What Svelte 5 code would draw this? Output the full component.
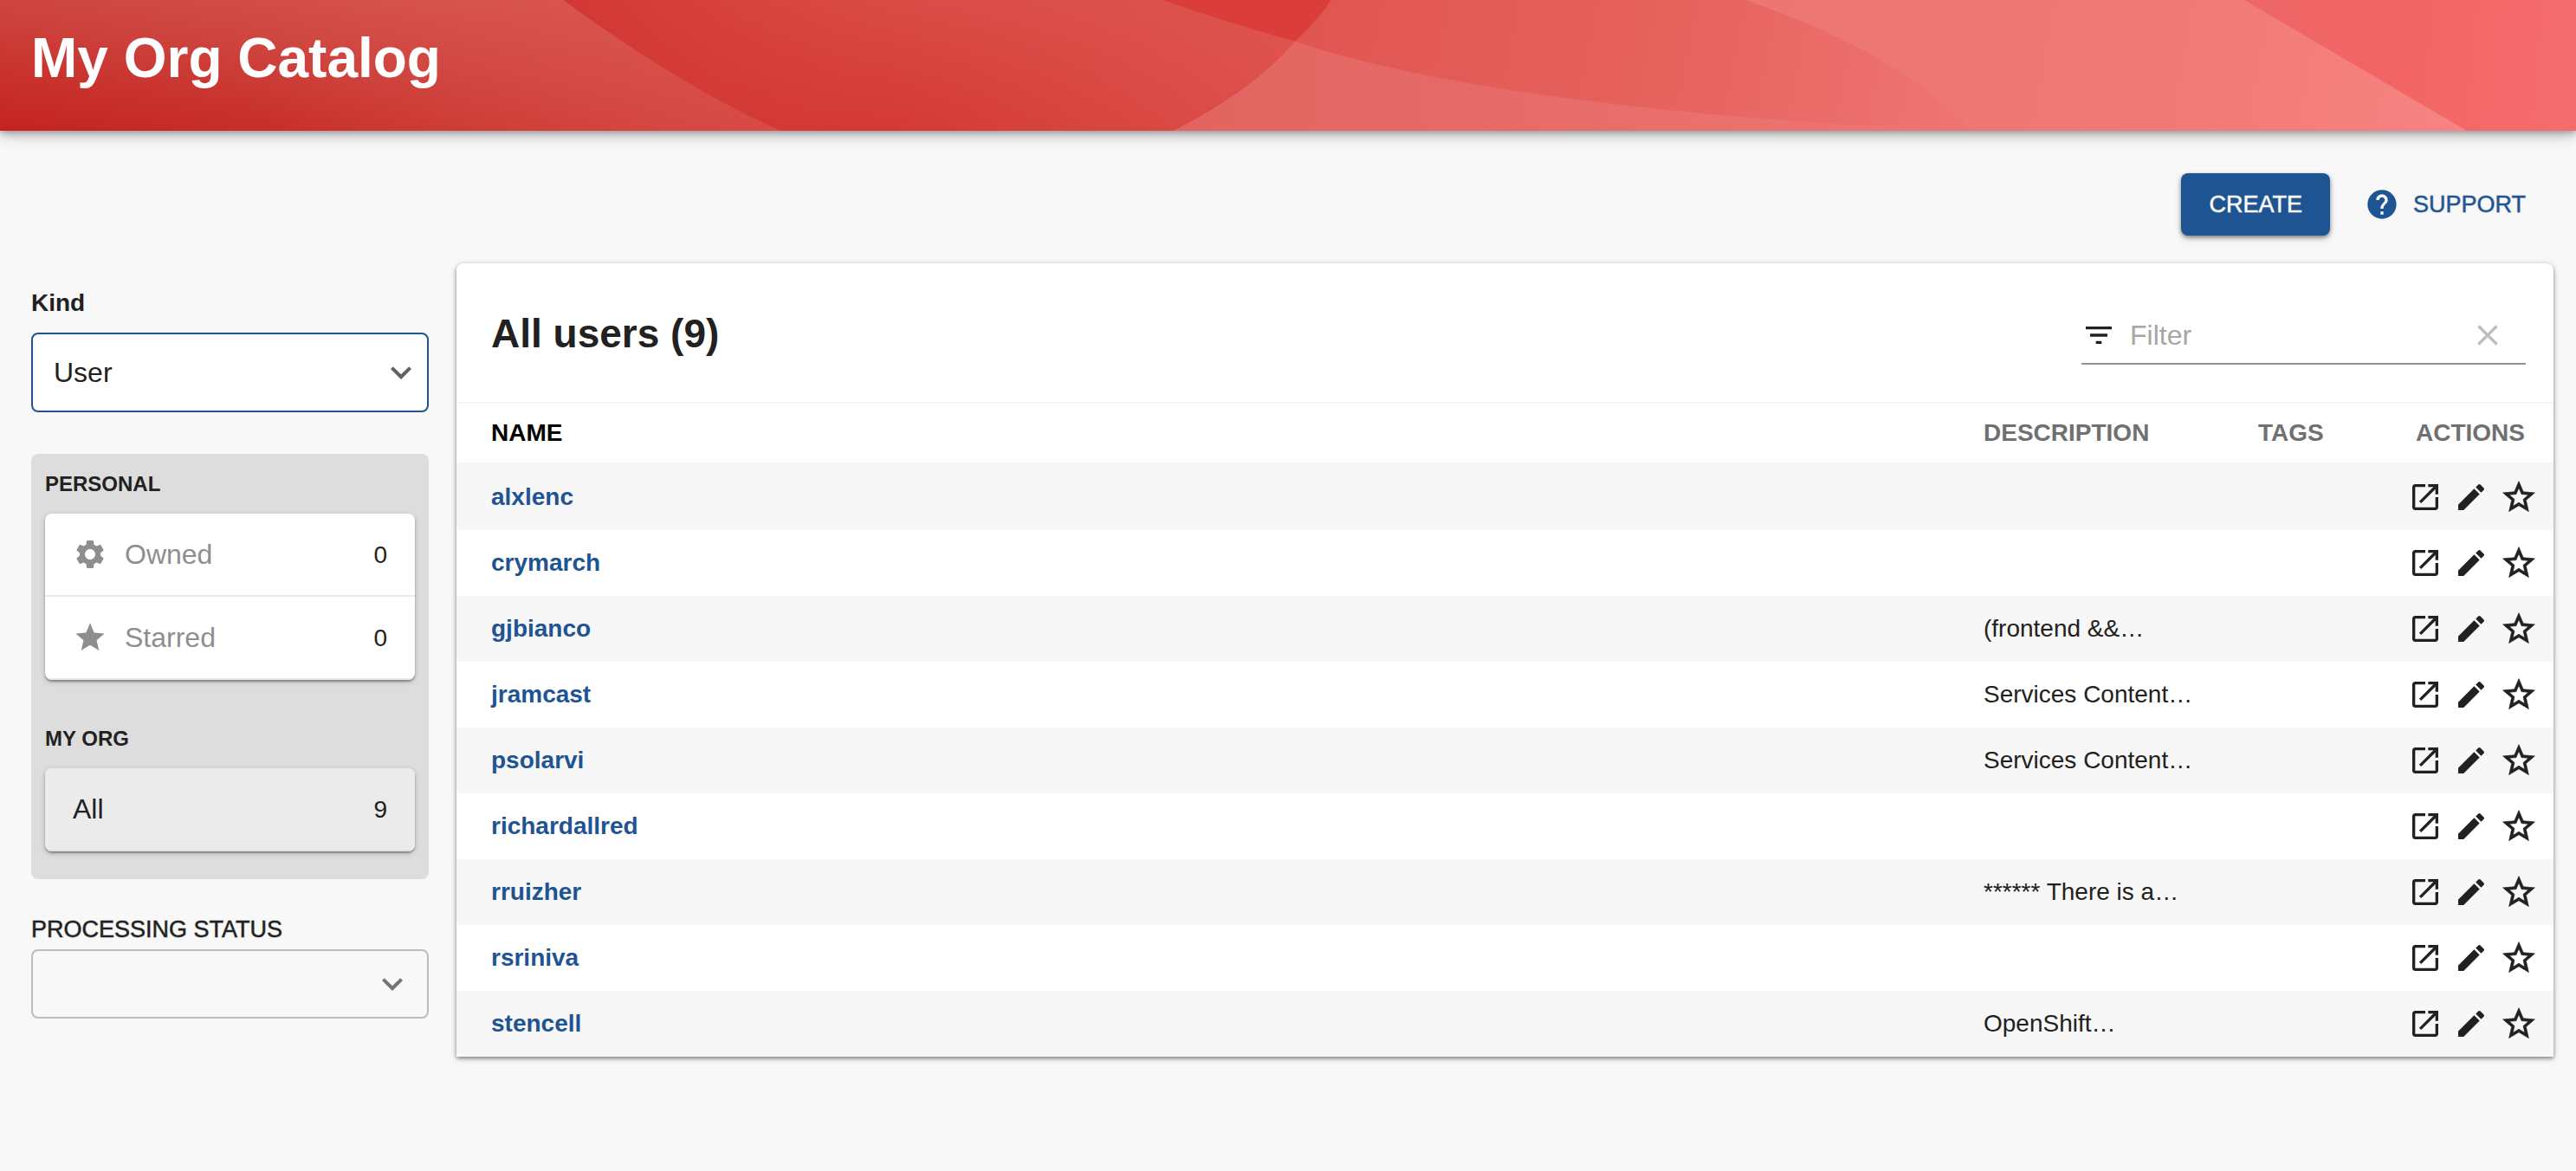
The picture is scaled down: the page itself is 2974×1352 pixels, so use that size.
<script>
  let kind = $state('User');
  let status = $state('');
  let filter = $state('');

  const users = [
    { name: 'alxlenc', description: '' },
    { name: 'crymarch', description: '' },
    { name: 'gjbianco', description: '(frontend &&…' },
    { name: 'jramcast', description: 'Services Content…' },
    { name: 'psolarvi', description: 'Services Content…' },
    { name: 'richardallred', description: '' },
    { name: 'rruizher', description: '****** There is a…' },
    { name: 'rsriniva', description: '' },
    { name: 'stencell', description: 'OpenShift…' },
  ];

  const icons = {
    help: 'M12 2C6.48 2 2 6.48 2 12s4.48 10 10 10 10-4.48 10-10S17.52 2 12 2zm1 17h-2v-2h2v2zm2.07-7.75l-.9.92C13.45 12.9 13 13.5 13 15h-2v-.5c0-1.1.45-2.1 1.17-2.83l1.24-1.26c.37-.36.59-.86.59-1.41 0-1.1-.9-2-2-2s-2 .9-2 2H8c0-2.21 1.79-4 4-4s4 1.79 4 4c0 .88-.36 1.68-.93 2.25z',
    gear: 'M19.14 12.94c.04-.3.06-.61.06-.94 0-.32-.02-.64-.07-.94l2.03-1.58c.18-.14.23-.41.12-.61l-1.92-3.32c-.12-.22-.37-.29-.59-.22l-2.39.96c-.5-.38-1.03-.7-1.62-.94l-.36-2.54c-.04-.24-.24-.41-.48-.41h-3.84c-.24 0-.43.17-.47.41l-.36 2.54c-.59.24-1.13.57-1.62.94l-2.39-.96c-.22-.08-.47 0-.59.22L2.74 8.87c-.12.21-.08.47.12.61l2.03 1.58c-.05.3-.09.63-.09.94s.02.64.07.94l-2.03 1.58c-.18.14-.23.41-.12.61l1.92 3.32c.12.22.37.29.59.22l2.39-.96c.5.38 1.03.7 1.62.94l.36 2.54c.05.24.24.41.48.41h3.84c.24 0 .44-.17.47-.41l.36-2.54c.59-.24 1.13-.56 1.62-.94l2.39.96c.22.08.47 0 .59-.22l1.92-3.32c.12-.22.07-.47-.12-.61l-2.01-1.58zM12 15.6c-1.98 0-3.6-1.62-3.6-3.6s1.62-3.6 3.6-3.6 3.6 1.62 3.6 3.6-1.62 3.6-3.6 3.6z',
    star: 'M12 17.27L18.18 21l-1.64-7.03L22 9.24l-7.19-.61L12 2 9.19 8.63 2 9.24l5.46 4.73L5.82 21z',
    starBorder: 'M22 9.24l-7.19-.62L12 2 9.19 8.63 2 9.24l5.46 4.73L5.82 21 12 17.27 18.18 21l-1.63-7.03L22 9.24zM12 15.4l-3.76 2.27 1-4.28-3.32-2.88 4.38-.38L12 6.1l1.71 4.04 4.38.38-3.32 2.88 1 4.28L12 15.4z',
    filter: 'M10 18h4v-2h-4v2zM3 6v2h18V6H3zm3 7h12v-2H6v2z',
    clear: 'M19 6.41L17.59 5 12 10.59 6.41 5 5 6.41 10.59 12 5 17.59 6.41 19 12 13.41 17.59 19 19 17.59 13.41 12z',
    open: 'M19 19H5V5h7V3H5c-1.11 0-2 .9-2 2v14c0 1.1.89 2 2 2h14c1.1 0 2-.9 2-2v-7h-2v7zM14 3v2h3.59l-9.83 9.83 1.41 1.41L19 6.41V10h2V3h-7z',
    edit: 'M3 17.25V21h3.75L17.81 9.94l-3.75-3.75L3 17.25zM20.71 7.04c.39-.39.39-1.02 0-1.41l-2.34-2.34a.9959.9959 0 00-1.41 0l-1.83 1.83 3.75 3.75 1.83-1.83z',
    chevron: 'M7.41 8.59L12 13.17l4.59-4.58L18 10l-6 6-6-6 1.41-1.41z',
  };
</script>

{#snippet icon(path, kindClass = '')}
  <svg class="icon {kindClass}" viewBox="0 0 24 24" aria-hidden="true"><path d={path} /></svg>
{/snippet}

<header class="banner">
  <svg class="waves" viewBox="0 0 2974 152" preserveAspectRatio="none" aria-hidden="true">
    <defs>
      <linearGradient id="left" gradientUnits="userSpaceOnUse" x1="0" y1="160" x2="38" y2="-90">
        <stop offset="0" stop-color="#c4211e" />
        <stop offset="0.6" stop-color="#ce443e" />
        <stop offset="1" stop-color="#d6574f" />
      </linearGradient>
      <linearGradient id="leftX" gradientUnits="userSpaceOnUse" x1="300" y1="0" x2="899" y2="0">
        <stop offset="0" stop-color="#de504b" stop-opacity="0" />
        <stop offset="1" stop-color="#de504b" stop-opacity="0.6" />
      </linearGradient>
      <linearGradient id="second" gradientUnits="userSpaceOnUse" x1="1000" y1="170" x2="1050" y2="-50">
        <stop offset="0" stop-color="#d33632" />
        <stop offset="1" stop-color="#dc524c" />
      </linearGradient>
      <linearGradient id="secondX" gradientUnits="userSpaceOnUse" x1="650" y1="0" x2="1500" y2="0">
        <stop offset="0" stop-color="#d03331" stop-opacity="0.7" />
        <stop offset="0.45" stop-color="#d94641" stop-opacity="0" />
        <stop offset="1" stop-color="#e05450" stop-opacity="0.7" />
      </linearGradient>
      <linearGradient id="third" gradientUnits="userSpaceOnUse" x1="1500" y1="0" x2="2260" y2="150">
        <stop offset="0" stop-color="#e15551" />
        <stop offset="0.55" stop-color="#e6625d" />
        <stop offset="1" stop-color="#ee7473" />
      </linearGradient>
      <linearGradient id="fourth" gradientUnits="userSpaceOnUse" x1="1355" y1="0" x2="2276" y2="0">
        <stop offset="0" stop-color="#e16460" />
        <stop offset="1" stop-color="#ee7674" />
      </linearGradient>
      <linearGradient id="fifth" gradientUnits="userSpaceOnUse" x1="2015" y1="0" x2="2846" y2="150">
        <stop offset="0" stop-color="#eb7672" />
        <stop offset="0.6" stop-color="#f17977" />
        <stop offset="1" stop-color="#f68482" />
      </linearGradient>
      <linearGradient id="sixth" gradientUnits="userSpaceOnUse" x1="2591" y1="0" x2="2974" y2="40">
        <stop offset="0" stop-color="#ee6668" />
        <stop offset="0.5" stop-color="#f26564" />
        <stop offset="1" stop-color="#f56c6f" />
      </linearGradient>
    </defs>
    <rect width="2974" height="152" fill="url(#sixth)" />
    <path d="M0 0H2591L2848 152H0Z" fill="url(#fifth)" />
    <path d="M0 0H2015Q2190 60 2277 152H0Z" fill="url(#third)" />
    <path d="M1495 48C1680 112 2020 142 2277 152H1354Q1446 105 1495 48Z" fill="url(#fourth)" />
    <path d="M0 0H1537Q1521 24 1495 48Q1446 105 1354 152H0Z" fill="#da3d3a" />
    <path d="M0 0H1342Q1418 27 1495 48Q1446 105 1354 152H0Z" fill="url(#second)" />
    <path d="M650 0H1342Q1418 27 1495 48Q1446 105 1354 152H650Z" fill="url(#secondX)" />
    <path d="M0 0H650C725 55 812 112 901 152H0Z" fill="url(#left)" />
    <path d="M0 0H650C725 55 812 112 901 152H0Z" fill="url(#leftX)" />
  </svg>
  <h1>My Org Catalog</h1>
</header>

<main>
  <div class="toolbar">
    <button class="create" type="button">CREATE</button>
    <button class="support" type="button">{@render icon(icons.help)}SUPPORT</button>
  </div>

  <div class="layout">
    <aside>
      <label class="kind-label" for="kind">Kind</label>
      <div class="select kind">
        <select id="kind" bind:value={kind}>
          <option>User</option>
        </select>
        {@render icon(icons.chevron, 'chevron')}
      </div>

      <div class="panel">
        <h2>PERSONAL</h2>
        <div class="group">
          <button class="item muted" type="button">
            {@render icon(icons.gear)}<span class="item-name">Owned</span><span class="count">0</span>
          </button>
          <button class="item muted" type="button">
            {@render icon(icons.star)}<span class="item-name">Starred</span><span class="count">0</span>
          </button>
        </div>
        <h2>MY ORG</h2>
        <div class="group">
          <button class="item selected" type="button">
            <span class="item-name">All</span><span class="count">9</span>
          </button>
        </div>
      </div>

      <label class="status-label" for="status">PROCESSING STATUS</label>
      <div class="select status">
        <select id="status" bind:value={status}>
          <option value=""></option>
        </select>
        {@render icon(icons.chevron, 'chevron')}
      </div>
    </aside>

    <section class="card">
      <div class="card-head">
        <h2>All users (9)</h2>
        <div class="filter">
          {@render icon(icons.filter)}
          <input type="text" placeholder="Filter" aria-label="Filter" bind:value={filter} />
          <button class="clear" type="button" aria-label="Clear filter" onclick={() => (filter = '')}>
            {@render icon(icons.clear)}
          </button>
        </div>
      </div>
      <table>
        <thead>
          <tr>
            <th class="name">NAME</th>
            <th class="description">DESCRIPTION</th>
            <th class="tags">TAGS</th>
            <th class="actions">ACTIONS</th>
          </tr>
        </thead>
        <tbody>
          {#each users as user}
            <tr>
              <td><a href="#{user.name}">{user.name}</a></td>
              <td>{user.description}</td>
              <td></td>
              <td>
                <div class="action-list">
                  <a href="#view-{user.name}" aria-label="View {user.name}">{@render icon(icons.open)}</a>
                  <a href="#edit-{user.name}" aria-label="Edit {user.name}">{@render icon(icons.edit)}</a>
                  <button type="button" aria-label="Star {user.name}">{@render icon(icons.starBorder, 'outline')}</button>
                </div>
              </td>
            </tr>
          {/each}
        </tbody>
      </table>
    </section>
  </div>
</main>

<style>
  :global(body) {
    background: #f8f8f8;
    color: #212121;
    font-family: 'Liberation Sans', Arial, sans-serif;
    font-size: 28px;
    line-height: 32px;
  }

  h1,
  h2 {
    margin: 0;
  }

  button,
  input,
  select {
    font: inherit;
    color: inherit;
    margin: 0;
    padding: 0;
    border: 0;
    background: none;
  }

  button {
    cursor: pointer;
  }

  .icon {
    display: block;
    flex: none;
    width: 40px;
    height: 40px;
    fill: currentColor;
  }

  .icon.outline {
    width: 44px;
    height: 44px;
    overflow: visible;
    stroke: currentColor;
    stroke-width: 0.4;
  }

  .banner {
    display: grid;
    box-shadow:
      0 4px 16px rgba(0, 0, 0, 0.28),
      0 2px 8px rgba(0, 0, 0, 0.24);
  }

  .banner > * {
    grid-area: 1 / 1;
  }

  .waves {
    width: 100%;
    height: 100%;
    min-height: 0;
    contain: size;
  }

  h1 {
    padding: 31px 36px 48px;
    color: #fff;
    font-size: 64px;
    line-height: 72px;
    z-index: 1;
  }

  main {
    padding: 49px 26px 48px 36px;
  }

  .toolbar {
    display: flex;
    justify-content: flex-end;
    align-items: center;
    gap: 40px;
    padding-right: 32px;
    margin-bottom: 32px;
  }

  .create,
  .support,
  .status-label {
    font-size: 27px;
    line-height: 32px;
    -webkit-text-stroke: 1px color-mix(in srgb, currentColor 50%, transparent);
  }

  .create {
    padding: 20px 32px;
    border-radius: 8px;
    background: #1f5493;
    color: #fff;
    box-shadow:
      0 2px 4px rgba(0, 0, 0, 0.4),
      0 4px 10px rgba(0, 0, 0, 0.16);
  }

  .support {
    display: flex;
    align-items: center;
    gap: 16px;
    color: #1f5493;
  }

  .layout {
    display: grid;
    grid-template-columns: 459px minmax(0, 1fr);
    gap: 32px;
    align-items: start;
  }

  aside {
    display: flex;
    flex-direction: column;
    padding-top: 30px;
  }

  .kind-label {
    font-weight: bold;
    margin-bottom: 18px;
  }

  .select {
    display: grid;
    align-items: center;
  }

  .select > :global(*) {
    grid-area: 1 / 1;
  }

  .select select {
    appearance: none;
    width: 100%;
    border-radius: 8px;
    padding: 0 72px 0 24px;
    font-size: 32px;
  }

  .select .chevron {
    width: 48px;
    height: 48px;
    justify-self: end;
    pointer-events: none;
    color: #616161;
  }

  .kind select {
    height: 92px;
    border: 2px solid #1f5493;
    background: #fff;
  }

  .kind .chevron {
    margin-right: 8px;
  }

  .status select {
    height: 80px;
    border: 2px solid #bdbdbd;
  }

  .status .chevron {
    margin-right: 18px;
    color: #757575;
  }

  .panel {
    margin: 48px 0 42px;
    padding: 0 16px 32px;
    border-radius: 8px;
    background: #ddd;
  }

  .panel h2 {
    padding: 19px 0 18px;
    font-size: 24px;
    line-height: 32px;
  }

  .panel .group + h2 {
    padding-top: 52px;
  }

  .group {
    border-radius: 8px;
    overflow: hidden;
    background: #fff;
    box-shadow:
      0 2px 2px rgba(0, 0, 0, 0.3),
      0 2px 6px rgba(0, 0, 0, 0.2);
  }

  .item {
    display: flex;
    align-items: center;
    width: 100%;
    min-height: 96px;
    padding: 0 32px;
    border-bottom: 2px solid #ebebeb;
    text-align: left;
  }

  .item .icon {
    margin-right: 20px;
  }

  .item-name {
    flex: 1;
    font-size: 32px;
  }

  .muted {
    color: #8e8e8e;
  }

  .count {
    color: #212121;
    line-height: 32px;
    padding-top: 2px;
  }

  .selected {
    background: #ebebeb;
    border-bottom-color: #e0e0e0;
  }

  .status-label {
    margin-bottom: 7px;
  }

  .card {
    border-radius: 8px 8px 0 0;
    background: #fff;
    box-shadow:
      0 2px 4px rgba(0, 0, 0, 0.4),
      0 2px 8px rgba(0, 0, 0, 0.16);
  }

  .card-head {
    display: flex;
    align-items: center;
    justify-content: space-between;
    min-height: 160px;
    padding: 0 32px 0 40px;
  }

  .card-head h2 {
    font-size: 46px;
    line-height: 56px;
    padding-top: 2px;
  }

  .filter {
    display: flex;
    align-items: center;
    width: 513px;
    height: 64px;
    margin-top: 8px;
    border-bottom: 2px solid #949494;
  }

  .filter input {
    flex: 1;
    min-width: 0;
    padding: 0 16px;
    font-size: 32px;
    outline: 0;
  }

  .filter input::placeholder {
    color: #a6a6a6;
    opacity: 1;
  }

  .clear {
    margin-right: 24px;
    color: #bcbcbc;
  }

  table {
    width: 100%;
    border-collapse: separate;
    border-spacing: 0;
    table-layout: fixed;
  }

  th,
  td {
    padding: 0 0 0 40px;
    text-align: left;
    white-space: nowrap;
  }

  th {
    height: 68px;
    border-top: 2px solid #f5f5f5;
    border-bottom: 2px solid #f5f5f5;
    color: #707070;
  }

  th.name {
    color: #000;
  }

  .description {
    width: 277px;
  }

  .tags {
    width: 133px;
  }

  .actions {
    width: 159px;
    padding-left: 49px;
  }

  td {
    height: 76px;
  }

  tbody tr:nth-child(odd) {
    background: #f7f7f7;
  }

  td a {
    color: #1f5493;
    font-weight: bold;
    text-decoration: none;
  }

  .action-list {
    display: flex;
    align-items: center;
    gap: 13px;
  }

  .action-list a,
  .action-list button {
    color: #212121;
  }
</style>
